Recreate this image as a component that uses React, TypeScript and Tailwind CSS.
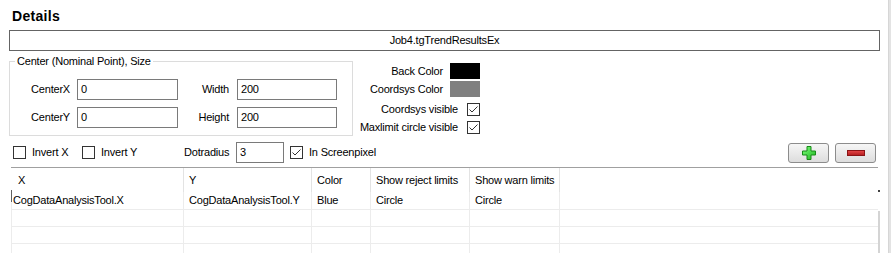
import type { ReactNode } from 'react';

const font = { fontFamily: '"Liberation Sans", Arial, sans-serif' };

function CheckBox({ checked = false }: { checked?: boolean }) {
  return (
    <div className="w-[13px] h-[13px] shrink-0 border border-[#333333] bg-white flex items-center justify-center">
      {checked && (
        <svg width="11" height="11" viewBox="0 0 11 11">
          <path d="M1.5 5.5 L4 8 L9.5 2.5" fill="none" stroke="#333333" strokeWidth="1" />
        </svg>
      )}
    </div>
  );
}

function TextBox({ value, className }: { value: string; className: string }) {
  return (
    <div className={`h-[21px] border border-[#7a7a7a] bg-white pl-[3px] flex items-center ${className}`}>
      {value}
    </div>
  );
}

function ToolButton({ children }: { children: ReactNode }) {
  return (
    <button className="w-[41px] h-[20px] rounded-[3px] border border-[#8c8c8c] bg-gradient-to-b from-[#f6f6f6] to-[#dddddd] flex items-center justify-center">
      {children}
    </button>
  );
}

const columns = [
  { title: 'X', w: 'w-[173px]', head: 'pl-[7px]', cell: 'pl-[2px]' },
  { title: 'Y', w: 'w-[128px]', head: 'pl-[5px]', cell: 'pl-[5px]' },
  { title: 'Color', w: 'w-[59px]', head: 'pl-[5px]', cell: 'pl-[5px]' },
  { title: 'Show reject limits', w: 'w-[99px]', head: 'pl-[5px]', cell: 'pl-[5px]' },
  { title: 'Show warn limits', w: 'w-[90px]', head: 'pl-[5px]', cell: 'pl-[5px]' },
];

const rows = [
  { vals: ['CogDataAnalysisTool.X', 'CogDataAnalysisTool.Y', 'Blue', 'Circle', 'Circle'], h: 'h-[18px]' },
  { vals: ['', '', '', '', ''], h: 'h-[17px]' },
  { vals: ['', '', '', '', ''], h: 'h-[17px]' },
  { vals: ['', '', '', '', ''], h: 'h-[17px]' },
];

export default function App() {
  return (
    <div
      className="w-[891px] h-[253px] bg-white text-black text-[11px] leading-[13px] tracking-[-0.2px] flex overflow-hidden"
      style={font}
    >
      <div className="w-[888px] flex flex-col">
        <div className="pt-[8px] pl-[12px] text-[14px] leading-[16px] font-bold tracking-[0.3px]">Details</div>

        <div className="mt-[6px] ml-[9px] w-[871px] h-[21px] border border-[#646464] flex items-center justify-center">
          Job4.tgTrendResultsEx
        </div>

        <div className="mt-[4px] flex">
          <fieldset className="ml-[9px] w-[344px] border border-[#dcdcdc] p-0 m-0">
            <legend className="ml-[5px] px-[2px]">Center (Nominal Point), Size</legend>
            <div className="pt-[11px] pb-[5px] flex flex-col gap-[7px]">
              <div className="flex items-center">
                <div className="w-[60px] text-right">CenterX</div>
                <TextBox value="0" className="ml-[7px] w-[101px]" />
                <div className="w-[51px] text-right">Width</div>
                <TextBox value="200" className="ml-[8px] w-[100px]" />
              </div>
              <div className="flex items-center">
                <div className="w-[60px] text-right">CenterY</div>
                <TextBox value="0" className="ml-[7px] w-[101px]" />
                <div className="w-[51px] text-right">Height</div>
                <TextBox value="200" className="ml-[8px] w-[100px]" />
              </div>
            </div>
          </fieldset>

          <div className="w-[127px] pt-[7px] flex flex-col items-end">
            <div className="h-[18px] flex items-center">
              Back Color
              <div className="ml-[7px] w-[30px] h-[16px] bg-black" />
            </div>
            <div className="h-[18px] flex items-center">
              Coordsys Color
              <div className="ml-[7px] w-[30px] h-[16px] bg-[#808080]" />
            </div>
            <div className="mt-[2px] h-[18px] flex items-center">
              Coordsys visible
              <div className="ml-[9px]">
                <CheckBox checked />
              </div>
            </div>
            <div className="h-[18px] flex items-center">
              Maxlimit circle visible
              <div className="ml-[9px]">
                <CheckBox checked />
              </div>
            </div>
          </div>
        </div>

        <div className="mt-[6px] h-[21px] pl-[13px] pr-[12px] flex items-center">
          <div className="w-[69px] flex items-center">
            <CheckBox />
            <span className="ml-[6px]">Invert X</span>
          </div>
          <div className="w-[102px] flex items-center">
            <CheckBox />
            <span className="ml-[6px]">Invert Y</span>
          </div>
          <div className="w-[52px]">Dotradius</div>
          <TextBox value="3" className="w-[48px]" />
          <div className="ml-[6px] flex items-center">
            <CheckBox checked />
            <span className="ml-[6px]">In Screenpixel</span>
          </div>
          <div className="ml-auto flex gap-[6px]">
            <ToolButton>
              <svg width="16" height="16" viewBox="0 0 16 16">
                <defs>
                  <linearGradient id="gp" x1="0" y1="0" x2="1" y2="1">
                    <stop offset="0" stopColor="#7dff7d" />
                    <stop offset="1" stopColor="#1fb51f" />
                  </linearGradient>
                </defs>
                <path
                  d="M6 1.5 H10 V6 H14.5 V10 H10 V14.5 H6 V10 H1.5 V6 H6 Z"
                  fill="url(#gp)"
                  stroke="#178a17"
                  strokeWidth="1"
                />
              </svg>
            </ToolButton>
            <ToolButton>
              <svg width="18" height="8" viewBox="0 0 18 8">
                <defs>
                  <linearGradient id="gm" x1="0" y1="0" x2="0" y2="1">
                    <stop offset="0" stopColor="#e8484a" />
                    <stop offset="1" stopColor="#b01c1e" />
                  </linearGradient>
                </defs>
                <rect x="0.5" y="1.5" width="17" height="5" fill="url(#gm)" stroke="#8a1416" strokeWidth="1" />
              </svg>
            </ToolButton>
          </div>
        </div>

        <div className="mt-[4px] flex-1 min-h-0 flex">
          <div className="ml-[11px] w-[867px] border-t border-[#a0a0a0] flex flex-col">
            <div className="h-[24px] shrink-0 flex">
              {columns.map((c) => (
                <div key={c.title} className={`${c.w} ${c.head} border-r border-[#e3e3e3] flex items-center`}>
                  {c.title}
                </div>
              ))}
              <div className="flex-1" />
            </div>
            {rows.map((r, i) => (
              <div
                key={i}
                className={`${r.h} relative flex border-b border-l border-[#ececec] shrink-0`}
              >
                {i === 0 && <span className="absolute -left-[1px] -top-[2px] w-[1px] h-[12px] bg-[#606060]" />}
                {columns.map((c, j) => (
                  <div key={c.title} className={`${c.w} ${c.cell} border-r border-[#ececec] flex items-center ${j === 0 ? '-ml-[1px]' : ''}`}>
                    {r.vals[j]}
                  </div>
                ))}
                <div className="flex-1" />
              </div>
            ))}
          </div>
          <div className="w-[2px] flex flex-col">
            <div className="mt-[23px] h-[2px] bg-[#404040]" />
            <div className="mt-[19px] flex-1 bg-[#d4d4d4]" />
          </div>
        </div>
      </div>
      <div className="w-[3px] bg-[#e3e3e3] border-l border-[#d6d6d6]" />
    </div>
  );
}
